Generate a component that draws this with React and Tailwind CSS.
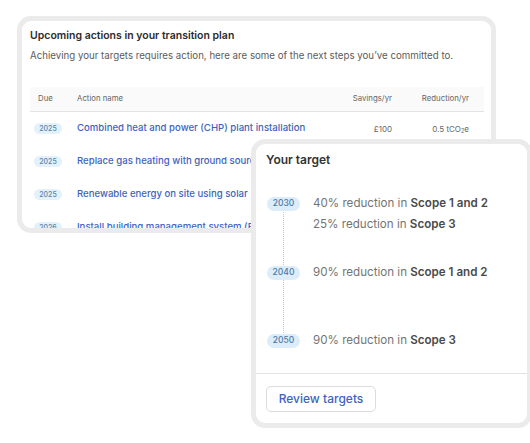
import React from "react";

const rows = [
  { due: "2025", name: "Combined heat and power (CHP) plant installation", savings: "£100", red: true },
  { due: "2025", name: "Replace gas heating with ground source heat pump", savings: "", red: false },
  { due: "2025", name: "Renewable energy on site using solar", savings: "", red: false },
  { due: "2026", name: "Install building management system (BMS)", savings: "", red: false },
];

function Badge({ children, big }) {
  return (
    <span
      className={
        big
          ? "relative z-10 inline-flex items-center justify-center w-[33px] h-[14px] rounded-full bg-[#dcedf9] text-[#4b7aa6] text-[8.5px] font-medium leading-none"
          : "inline-flex items-center justify-center w-[28px] h-[11px] rounded-full bg-[#e3f1fa] text-[#5a86ad] text-[7px] font-medium leading-none"
      }
    >
      {children}
    </span>
  );
}

export default function App() {
  return (
    <div className="relative w-[530px] h-[443px] bg-white overflow-hidden font-['Inter',sans-serif]">
      {/* Card 1 */}
      <div className="ml-[17px] mt-[16px] w-[479px] h-[217px] border-[5px] border-[#ebebeb] rounded-[14px] overflow-hidden bg-white">
        <div className="pl-[8px] pr-[7px] pt-[8px]">
          <div className="text-[10.5px] font-semibold text-[#2b2b2b] leading-[14px]">
            Upcoming actions in your transition plan
          </div>
          <div className="mt-[6px] text-[9.7px] text-[#5b5b5b] leading-[14px] whitespace-nowrap">
            Achieving your targets requires action, here are some of the next steps you’ve committed to.
          </div>
          <div className="mt-[24px]">
            <div className="grid grid-cols-[47px_263px_52px_77px_15px] h-[25px] items-center bg-[#fafafa] border-b border-[#e3e3e3] text-[7.8px] text-[#666]">
              <div className="pl-[8px]">Due</div>
              <div>Action name</div>
              <div className="text-right">Savings/yr</div>
              <div className="text-right">Reduction/yr</div>
              <div></div>
            </div>
            {rows.map((r, i) => (
              <div
                key={i}
                className="grid grid-cols-[47px_263px_52px_77px_15px] h-[33px] items-center"
              >
                <div className="pl-[4px] flex">
                  <Badge>{r.due}</Badge>
                </div>
                <div className="text-[9.6px] font-medium text-[#3d63c2] whitespace-nowrap overflow-hidden">
                  {r.name}
                </div>
                <div className="text-right text-[8px] text-[#666]">{r.savings}</div>
                <div className="text-right text-[8px] text-[#666]">
                  {r.red ? (
                    <span>
                      0.5 tCO<sub className="text-[5.5px]">2</sub>e
                    </span>
                  ) : null}
                </div>
                <div></div>
              </div>
            ))}
          </div>
        </div>
      </div>

      {/* Card 2 overlay */}
      <div className="absolute left-[251px] top-[139px] w-[281px] h-[289px] border-[5px] border-[#ebebeb] rounded-[14px] bg-white flex flex-col">
        <div className="pl-[10px] pt-[8px] text-[12px] font-semibold text-[#333] leading-[16px]">
          Your target
        </div>
        <div className="relative pl-[11px] pt-[25px] flex-1">
          <div className="absolute left-[27px] top-[42px] h-[123px] border-l border-dotted border-[#c8c8c8]"></div>
          <div className="flex items-start">
            <div className="w-[46px] h-[21px] flex items-center">
              <Badge big>2030</Badge>
            </div>
            <div className="text-[11.6px] text-[#747474] leading-[21px]">
              <div>
                40% reduction in <span className="font-semibold text-[#4a4a4a]">Scope 1 and 2</span>
              </div>
              <div>
                25% reduction in <span className="font-semibold text-[#4a4a4a]">Scope 3</span>
              </div>
            </div>
          </div>
          <div className="flex items-start mt-[27px]">
            <div className="w-[46px] h-[21px] flex items-center">
              <Badge big>2040</Badge>
            </div>
            <div className="text-[11.6px] text-[#747474] leading-[21px]">
              90% reduction in <span className="font-semibold text-[#4a4a4a]">Scope 1 and 2</span>
            </div>
          </div>
          <div className="flex items-start mt-[47px]">
            <div className="w-[46px] h-[21px] flex items-center">
              <Badge big>2050</Badge>
            </div>
            <div className="text-[11.6px] text-[#747474] leading-[21px]">
              90% reduction in <span className="font-semibold text-[#4a4a4a]">Scope 3</span>
            </div>
          </div>
        </div>
        <div className="border-t border-[#e3e3e3] h-[50px] pl-[10px] flex items-center">
          <button className="w-[110px] h-[26px] rounded-[5px] border border-[#dcdcdc] text-[12px] font-medium text-[#3d63c2] bg-white">
            Review targets
          </button>
        </div>
      </div>
    </div>
  );
}
